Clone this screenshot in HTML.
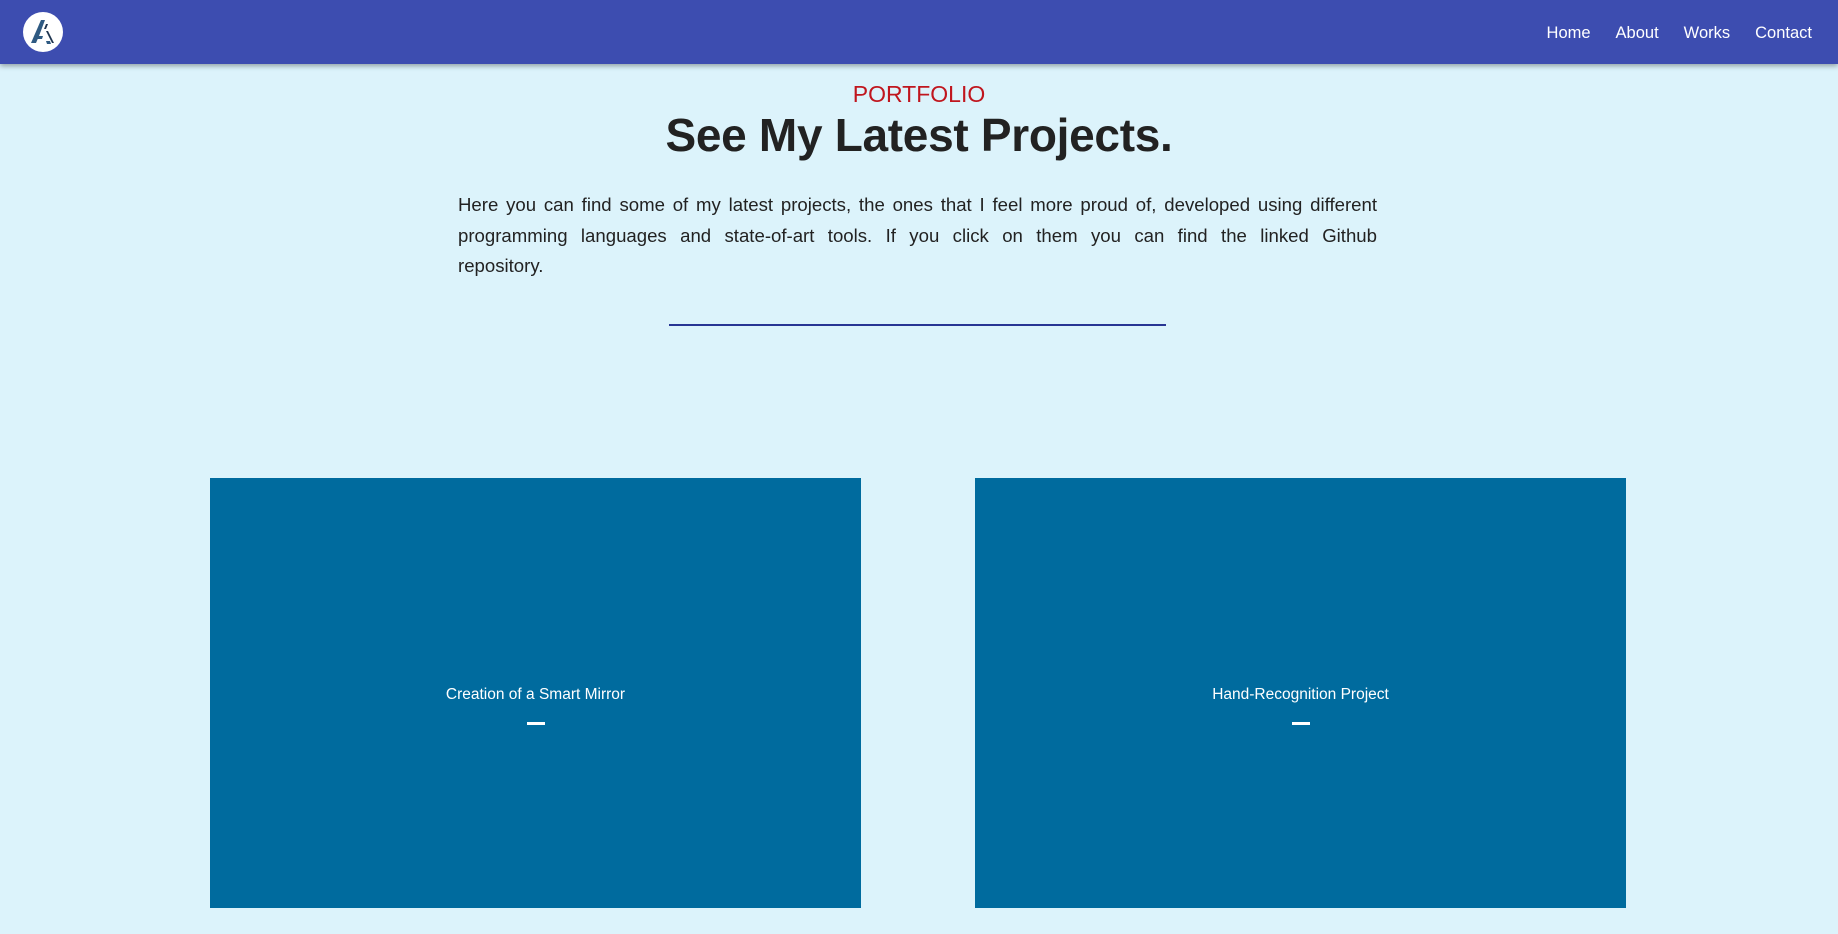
<!DOCTYPE html>
<html><head><meta charset="utf-8"><style>
*{margin:0;padding:0;box-sizing:border-box}
html,body{width:1838px;height:934px;overflow:hidden;background:#dcf3fb;font-family:"Liberation Sans",sans-serif}
.nav{position:absolute;left:0;top:0;width:1838px;height:64px;background:#3d4db0;box-shadow:0 2px 5px rgba(0,0,0,.35)}
.logo{position:absolute;left:23px;top:12px;width:40px;height:40px}
.links{position:absolute;top:24px;right:26px;display:flex;gap:25px;color:#fff;font-size:16.5px}
.pf{position:absolute;top:81px;width:100%;text-align:center;color:#c0161e;font-size:23px}
h1{position:absolute;top:108px;width:100%;text-align:center;color:#222;font-size:46px;font-weight:bold;letter-spacing:-0.3px}
.p{position:absolute;left:458px;top:190px;width:919px;font-size:18.6px;line-height:30.5px;color:#222}
.p span{display:block}
.p .j{text-align:justify;text-align-last:justify}
.hr{position:absolute;left:669px;top:324px;width:497px;height:2px;background:#283593}
.card{position:absolute;top:478px;width:651px;height:430px;background:#006b9e;color:#fff}
.card span{position:absolute;top:208px;width:100%;text-align:center;font-size:15.5px}
.card i{position:absolute;top:244px;left:50%;margin-left:-9px;width:18px;height:3px;background:#fff}
</style></head><body>
<div class="nav">
<svg class="logo" viewBox="0 0 40 40"><circle cx="20" cy="20" r="20" fill="#fff"/>
<path d="M8 31 L18 8 L22 8 L16 24 L13 31 Z" fill="#2f5a82"/>
<path d="M14 24 L20 24 L19 27 L13 27 Z" fill="#2f5a82"/>
<path d="M23 12 L25 12 L23 17 L21 17 Z" fill="#1f3550"/>
<path d="M23 19 L25 19 L31 31 L29 31 Z" fill="#1f3550"/>
<path d="M23 29 L27 29 L28 32 L24 32 Z" fill="#2f5a82"/></svg>
<div class="links"><span>Home</span><span>About</span><span>Works</span><span>Contact</span></div>
</div>
<div class="pf">PORTFOLIO</div>
<h1>See My Latest Projects.</h1>
<div class="p"><span class="j">Here you can find some of my latest projects, the ones that I feel more proud of, developed using different</span><span class="j">programming languages and state-of-art tools. If you click on them you can find the linked Github</span><span>repository.</span></div>
<div class="hr"></div>
<div class="card" style="left:210px"><span>Creation of a Smart Mirror</span><i></i></div>
<div class="card" style="left:975px"><span>Hand-Recognition Project</span><i></i></div>
</body></html>
